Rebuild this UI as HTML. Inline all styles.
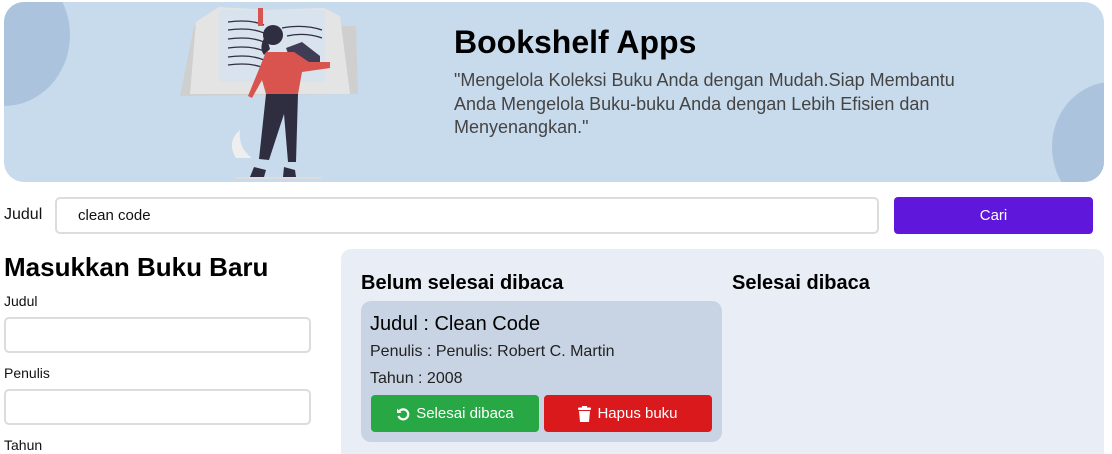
<!DOCTYPE html>
<html><head><meta charset="utf-8"><style>
*{margin:0;padding:0;box-sizing:border-box}
html,body{width:1112px;height:454px;overflow:hidden}
body{background:#fff;font-family:"Liberation Sans",sans-serif;color:#111;position:relative}
.abs{position:absolute;white-space:nowrap}
.banner{position:absolute;left:4px;top:2px;width:1100px;height:180px;background:#c8dbed;border-radius:20px;overflow:hidden}
.inp{position:absolute;border:2px solid #dcdcdc;border-radius:5px;background:#fff}
.btn{position:absolute;color:#fff;border-radius:4px;font-size:15px;display:flex;align-items:center;justify-content:center}
</style></head><body>
<div class="banner">
 <div style="position:absolute;left:-66px;top:-38px;width:132px;height:142px;border-radius:50%;background:#abc3dc"></div>
 <div style="position:absolute;left:1048px;top:80px;width:120px;height:130px;border-radius:50%;background:#abc3dc"></div>
 <svg style="position:absolute;left:0;top:0" width="1100" height="180">
  <path d="M190 24 L352 24 L354 92 L176 94 Z" fill="#cfcfcf"/>
  <path d="M192 20 L215 5 L265 8 L320 6 L336 14 L346 92 L186 92 Z" fill="#e4e4e4"/>
  <rect x="215" y="8" width="106" height="72" fill="#d8e3ee"/>
  <g stroke="#2f2e41" stroke-width="1.3" fill="none">
   <path d="M224 20 q22-3 36 3"/><path d="M224 28 q22-3 36 3"/><path d="M224 37 q22-3 36 3"/><path d="M224 46 q22-3 36 3"/><path d="M224 55 q22-3 36 3"/><path d="M224 63 q22-3 36 3"/>
   <path d="M278 26 q22-4 40 2"/><path d="M283 34 q18-4 35 2"/>
  </g>
  <rect x="254" y="6" width="5" height="18" fill="#d9534f"/>
  <path d="M282 46 L298 40 L316 54 L316 62 L288 62 Z" fill="#3f3d56"/>
  <path d="M232 156 q-10-16 4-28 q-2 18 12 28 Z" fill="#eeeeee"/>
  <ellipse cx="269" cy="33" rx="10" ry="10" fill="#2f2e41"/>
  <path d="M262 33 q-8 12 -2 20 l6-6 Z" fill="#2f2e41"/>
  <path d="M262 50 L290 50 L305 60 L326 60 L326 66 L298 70 L294 92 L262 92 L258 78 L248 96 L244 94 Z" fill="#d9534f"/>
  <path d="M262 92 L294 92 L292 160 L284 160 L280 112 L265 158 L255 157 Z" fill="#2f2e41"/>
  <path d="M250 165 L262 168 L260 175 L246 175 Z M280 165 L291 168 L292 175 L279 175 Z" fill="#2f2e41"/>
  <rect x="232" y="175" width="85" height="2" fill="#ddd"/>
 </svg>
 <div class="abs" style="left:450px;top:22px;font-size:32px;font-weight:bold;color:#000">Bookshelf Apps</div>
 <div class="abs" style="left:450px;top:67px;font-size:18px;line-height:23.5px;color:#444">"Mengelola Koleksi Buku Anda dengan Mudah.Siap Membantu<br>Anda Mengelola Buku-buku Anda dengan Lebih Efisien dan<br>Menyenangkan."</div>
</div>

<div class="abs" style="left:4px;top:206px;font-size:16px">Judul</div>
<div class="inp" style="left:55px;top:197px;width:824px;height:37px"></div>
<div class="abs" style="left:78px;top:207px;font-size:15px">clean code</div>
<div class="btn" style="left:894px;top:197px;width:199px;height:37px;background:#5f17dc">Cari</div>

<div class="abs" style="left:4px;top:252px;font-size:26px;font-weight:bold;color:#000">Masukkan Buku Baru</div>
<div class="abs" style="left:4px;top:293px;font-size:14px">Judul</div>
<div class="inp" style="left:4px;top:317px;width:307px;height:36px"></div>
<div class="abs" style="left:4px;top:365px;font-size:14px">Penulis</div>
<div class="inp" style="left:4px;top:389px;width:307px;height:36px"></div>
<div class="abs" style="left:4px;top:437px;font-size:14px">Tahun</div>

<div style="position:absolute;left:341px;top:249px;width:763px;height:205px;background:#e9eef6;border-radius:10px 10px 0 0"></div>
<div class="abs" style="left:361px;top:272px;font-size:20px;font-weight:bold;color:#000">Belum selesai dibaca</div>
<div class="abs" style="left:732px;top:272px;font-size:20px;font-weight:bold;color:#000">Selesai dibaca</div>
<div style="position:absolute;left:361px;top:301px;width:361px;height:141px;background:#c8d4e3;border-radius:10px"></div>
<div class="abs" style="left:370px;top:313px;font-size:20px;color:#000">Judul : Clean Code</div>
<div class="abs" style="left:370px;top:343px;font-size:16px;color:#222">Penulis : Penulis: Robert C. Martin</div>
<div class="abs" style="left:370px;top:370px;font-size:16px;color:#222">Tahun : 2008</div>
<div class="btn" style="left:371px;top:395px;width:168px;height:37px;background:#28a745">
 <svg width="14" height="14" viewBox="0 0 14 14" style="margin-right:6px"><path d="M3.5 4 A5 5 0 1 1 2.5 9" stroke="#fff" stroke-width="2.2" fill="none"/><path d="M1 1.5 L1 6 L5.5 6 Z" fill="#fff"/></svg>Selesai dibaca</div>
<div class="btn" style="left:544px;top:395px;width:168px;height:37px;background:#d9191c">
 <svg width="13" height="16" viewBox="0 0 13 16" style="margin-right:6px"><rect x="0" y="1.5" width="13" height="2.5" rx="1" fill="#fff"/><rect x="4" y="0" width="5" height="2" fill="#fff"/><path d="M1 5 H12 L11 16 H2 Z" fill="#fff"/></svg>Hapus buku</div>
</body></html>
